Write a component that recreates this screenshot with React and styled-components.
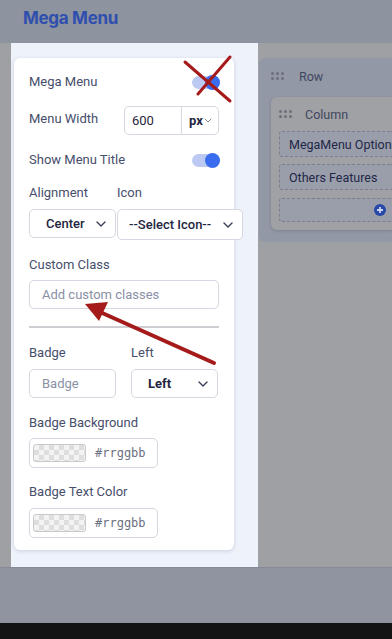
import React from "react";
import styled, { createGlobalStyle } from "styled-components";

const Global = createGlobalStyle`
  html, body { margin: 0; padding: 0; }
  body { font-family: Roboto, "Noto Sans", sans-serif; background: #141414; }
  * { box-sizing: border-box; }
`;

const Page = styled.div`
  position: relative;
  width: 392px;
  height: 639px;
  display: flex;
  flex-direction: column;
  overflow: hidden;
`;

const Header = styled.header`
  height: 43px;
  flex: none;
  background: #8e93a0;
  display: flex;
  align-items: center;
  padding: 0 0 8px 23px;
`;

const Title = styled.h1`
  margin: 0;
  font-family: Inter, Roboto, sans-serif;
  font-size: 17px;
  font-weight: 700;
  color: #2f4fae;
  letter-spacing: -0.3px;
`;

const Main = styled.div`
  height: 524px;
  flex: none;
  background: #9fa0a4;
  display: flex;
  padding-left: 11px;
`;

const Panel = styled.aside`
  width: 247px;
  flex: none;
  background: #eef2fb;
  padding: 15px 0 0 3px;
`;

const Card = styled.div`
  width: 220px;
  height: 492px;
  background: #fff;
  border-radius: 6px;
  box-shadow: 0 1px 4px rgba(40, 50, 80, 0.18);
  padding: 14px 15px 12px;
  display: flex;
  flex-direction: column;
`;

const Row = styled.div`
  display: flex;
  align-items: center;
  justify-content: space-between;
  height: ${(p) => p.h || 20}px;
  margin-top: ${(p) => p.mt || 0}px;
`;

const Label = styled.div`
  font-size: 13px;
  color: #474e6b;
  line-height: 16px;
  margin-top: ${(p) => p.mt || 0}px;
  margin-bottom: ${(p) => p.mb || 0}px;
`;

const Toggle = styled.div`
  position: relative;
  width: 28px;
  height: 13px;
  border-radius: 7px;
  background: #bccaf3;
  margin-right: -1px;
  &::after {
    content: "";
    position: absolute;
    right: 0px;
    top: -1px;
    width: 15px;
    height: 15px;
    border-radius: 50%;
    background: #3a6cf0;
  }
`;

const InputGroup = styled.div`
  width: 95px;
  height: 29px;
  border: 1px solid #d5d8e0;
  border-radius: 5px;
  display: flex;
  background: #fff;
`;

const GroupValue = styled.div`
  width: 57px;
  border-right: 1px solid #d5d8e0;
  display: flex;
  align-items: center;
  padding-left: 7px;
  font-size: 13px;
  color: #1f2640;
`;

const GroupUnit = styled.div`
  flex: 1;
  display: flex;
  align-items: center;
  justify-content: space-between;
  padding: 0 6px 0 7px;
  font-size: 13px;
  font-weight: 700;
  color: #1f2640;
`;

const Grid = styled.div`
  display: grid;
  grid-template-columns: ${(p) => p.cols};
  column-gap: ${(p) => p.gap}px;
  margin-top: ${(p) => p.mt || 0}px;
`;

const Select = styled.div`
  height: ${(p) => p.h || 29}px;
  border: 1px solid #d5d8e0;
  border-radius: 5px;
  background: #fff;
  display: flex;
  align-items: center;
  justify-content: space-between;
  padding: 0 ${(p) => p.pr || 8}px 0 ${(p) => p.pl || 12}px;
  font-size: 13px;
  font-weight: ${(p) => p.fw || 500};
  color: #1f2640;
  white-space: nowrap;
`;

const Input = styled.div`
  height: 29px;
  border: 1px solid #d5d8e0;
  border-radius: 5px;
  background: #fff;
  display: flex;
  align-items: center;
  padding-left: 12px;
  font-size: 13px;
  color: #8a8fa6;
  margin-top: ${(p) => p.mt || 0}px;
`;

const Rule = styled.hr`
  margin: 17px 0 0;
  border: 0;
  height: 2px;
  background: #cfcfd3;
`;

const ColorInput = styled.div`
  width: 129px;
  height: 30px;
  border: 1px solid #d5d8e0;
  border-radius: 5px;
  background: #fff;
  display: flex;
  align-items: center;
  padding-left: 3px;
  gap: 9px;
  margin-top: ${(p) => p.mt || 0}px;
`;

const Swatch = styled.div`
  width: 53px;
  height: 18px;
  border: 1px solid #c9c9cb;
  border-radius: 3px;
  background-color: #f3f3f3;
  background-image: conic-gradient(#dedede 25%, #f3f3f3 0 50%, #dedede 0 75%, #f3f3f3 0);
  background-size: 10px 10px;
`;

const Hex = styled.span`
  font-family: "DejaVu Sans Mono", "Liberation Mono", monospace;
  font-size: 12px;
  color: #6b7082;
`;

const Canvas = styled.section`
  flex: 1;
  min-width: 0;
  padding: 15px 0 0 1px;
`;

const RowBox = styled.div`
  height: 184px;
  background: #9398a6;
  border-radius: 6px 0 0 6px;
  padding: 12px 0 12px 12px;
  display: flex;
  flex-direction: column;
`;

const BoxHeader = styled.div`
  display: flex;
  align-items: center;
  gap: ${(p) => p.gap}px;
  height: 12px;
  font-size: 12.5px;
  color: #3f4660;
`;

const Dots = styled.div`
  display: grid;
  grid-template-columns: repeat(3, 3px);
  grid-auto-rows: 3px;
  gap: 2px;
  span {
    width: 3px;
    height: 3px;
    border-radius: 50%;
    background: #6c707c;
  }
`;

const ColumnBox = styled.div`
  margin-top: 15px;
  flex: 1;
  min-width: 0;
  background: #a0a1a4;
  border-radius: 6px 0 0 6px;
  box-shadow: 0 1px 3px rgba(50, 55, 70, 0.25);
  padding: 11px 0 8px 8px;
  display: flex;
  flex-direction: column;
`;

const Item = styled.div`
  margin-top: ${(p) => p.mt}px;
  height: ${(p) => p.h || 26}px;
  border: 1px dashed #7b7f8c;
  border-right: 0;
  border-radius: 3px 0 0 3px;
  background: #9a9eab;
  display: flex;
  align-items: center;
  padding-left: 9px;
  font-size: 12.5px;
  color: #1e2747;
  white-space: nowrap;
  overflow: hidden;
`;

const PlusRow = styled.div`
  flex: 1;
  display: flex;
  justify-content: flex-end;
  padding-right: 6px;
`;

const Footer = styled.footer`
  height: 56px;
  flex: none;
  background: #8f94a0;
  border-top: 1px solid #858a98;
`;

const BottomBar = styled.div`
  flex: 1;
  background: #141414;
`;

const Overlay = styled.svg`
  position: absolute;
  left: 0;
  top: 0;
  pointer-events: none;
`;

const Chevron = ({ w = 10 }) => (
  <svg width={w} height="6" viewBox="0 0 10 6" fill="none">
    <path d="M1 1l4 4 4-4" stroke="#3a3f55" strokeWidth="1.4" strokeLinecap="round" strokeLinejoin="round" />
  </svg>
);

const SmallChevron = () => (
  <svg width="8" height="5" viewBox="0 0 8 5" fill="none">
    <path d="M1 1l3 3 3-3" stroke="#8a8fa0" strokeWidth="1" strokeLinecap="round" />
  </svg>
);

const DotGrid = () => (
  <Dots>
    {Array.from({ length: 6 }).map((_, i) => (
      <span key={i} />
    ))}
  </Dots>
);

export default function App() {
  return (
    <>
      <Global />
      <Page>
        <Header>
          <Title>Mega Menu</Title>
        </Header>
        <Main>
          <Panel>
            <Card>
              <Row>
                <Label>Mega Menu</Label>
                <Toggle />
              </Row>
              <Row h={29} mt={14}>
                <Label mb={3}>Menu Width</Label>
                <InputGroup>
                  <GroupValue>600</GroupValue>
                  <GroupUnit>
                    px
                    <SmallChevron />
                  </GroupUnit>
                </InputGroup>
              </Row>
              <Row mt={15}>
                <Label>Show Menu Title</Label>
                <Toggle />
              </Row>
              <Grid cols="87px 126px" gap={1} mt={15}>
                <Label>Alignment</Label>
                <Label>Icon</Label>
              </Grid>
              <Grid cols="87px 126px" gap={1} mt={8}>
                <Select pl={16} pr={9}>
                  Center
                  <Chevron />
                </Select>
                <Select h={31} pl={11} pr={9}>
                  --Select Icon--
                  <Chevron />
                </Select>
              </Grid>
              <Label mt={17}>Custom Class</Label>
              <Input mt={7}>Add custom classes</Input>
              <Rule />
              <Grid cols="87px 87px" gap={15} mt={17}>
                <Label>Badge</Label>
                <Label>Left</Label>
              </Grid>
              <Grid cols="87px 87px" gap={15} mt={8}>
                <Input>Badge</Input>
                <Select pl={16} pr={9} fw={700}>
                  Left
                  <Chevron />
                </Select>
              </Grid>
              <Label mt={17}>Badge Background</Label>
              <ColorInput mt={7}>
                <Swatch />
                <Hex>#rrggbb</Hex>
              </ColorInput>
              <Label mt={16}>Badge Text Color</Label>
              <ColorInput mt={8}>
                <Swatch />
                <Hex>#rrggbb</Hex>
              </ColorInput>
            </Card>
          </Panel>
          <Canvas>
            <RowBox>
              <BoxHeader gap={15}>
                <DotGrid />
                Row
              </BoxHeader>
              <ColumnBox>
                <BoxHeader gap={13}>
                  <DotGrid />
                  Column
                </BoxHeader>
                <Item mt={11}>MegaMenu Options</Item>
                <Item mt={7}>Others Features</Item>
                <Item mt={8} h={24}>
                  <PlusRow>
                    <svg width="12" height="12" viewBox="0 0 12 12">
                      <circle cx="6" cy="6" r="6" fill="#2848a8" />
                      <path d="M6 3v6M3 6h6" stroke="#c9d2ee" strokeWidth="1.8" />
                    </svg>
                  </PlusRow>
                </Item>
              </ColumnBox>
            </RowBox>
          </Canvas>
        </Main>
        <Footer />
        <BottomBar />
        <Overlay width="392" height="639" viewBox="0 0 392 639">
          <g stroke="#a51b1b" strokeWidth="3" strokeLinecap="round">
            <line x1="185" y1="62" x2="230" y2="101" />
            <line x1="230" y1="57" x2="198" y2="94" />
            <line x1="214" y1="363" x2="100" y2="312" strokeWidth="4" />
          </g>
          <polygon points="85,304 108,302 99,321" fill="#a51b1b" />
        </Overlay>
      </Page>
    </>
  );
}
